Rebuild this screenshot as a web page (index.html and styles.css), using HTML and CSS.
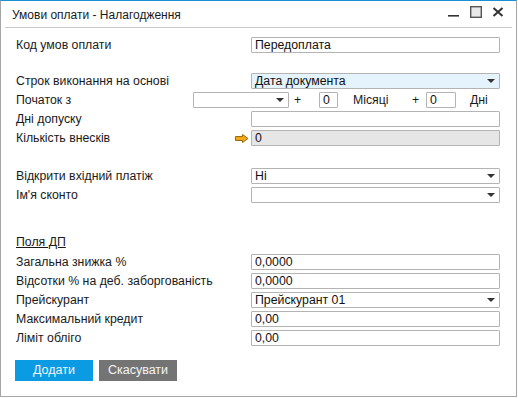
FILE: index.html
```html
<!DOCTYPE html>
<html lang="uk">

<head>
    <meta charset="UTF-8">
    <title>Умови оплати - Налагодження</title>
    <link rel="stylesheet" href="styles.css">
</head>

<body>
    <div class="window">
        <div class="titlebar">
            <div class="title">Умови оплати - Налагодження</div>
            <div class="win-btns">
                <svg width="12" height="12" viewBox="0 0 12 12"><rect x="0" y="9" width="11" height="1.6" fill="#333"/></svg>
                <svg width="12" height="12" viewBox="0 0 12 12"><rect x="0.7" y="0.7" width="10.6" height="10.6" fill="#e8e8e8" stroke="#555" stroke-width="1.4"/></svg>
                <svg width="12" height="12" viewBox="0 0 12 12"><path d="M1.5 2 L10.5 10 M10.5 2 L1.5 10" stroke="#333" stroke-width="2"/></svg>
            </div>
        </div>
        <div class="form">
            <div class="row first">
                <div class="label">Код умов оплати</div>
                <div class="field">Передоплата</div>
            </div>

            <div class="row group">
                <div class="label">Строк виконання на основі</div>
                <div class="field select active">Дата документа<span class="caret"></span></div>
            </div>
            <div class="row">
                <div class="label short">Початок з</div>
                <div class="field select start"><span class="caret"></span></div>
                <span class="plus">+</span>
                <div class="field num-a">0</div>
                <span class="unit months">Місяці</span>
                <span class="plus second">+</span>
                <div class="field num-b">0</div>
                <span class="unit days">Дні</span>
            </div>
            <div class="row">
                <div class="label">Дні допуску</div>
                <div class="field"></div>
            </div>
            <div class="row">
                <div class="label link-label">Кількість внесків
                    <svg class="link-arrow" width="14" height="9" viewBox="0 0 14 9"><path d="M0.5 2.5 H7.5 V0.5 L13 4.5 L7.5 8.5 V6.5 H0.5 Z" fill="#f2a71c" stroke="#9a6a08" stroke-width="1"/></svg>
                </div>
                <div class="field readonly">0</div>
            </div>

            <div class="row group wide">
                <div class="label">Відкрити вхідний платіж</div>
                <div class="field select">Ні<span class="caret"></span></div>
            </div>
            <div class="row">
                <div class="label">Ім'я сконто</div>
                <div class="field select"><span class="caret"></span></div>
            </div>

            <div class="section">Поля ДП</div>
            <div class="row">
                <div class="label">Загальна знижка %</div>
                <div class="field">0,0000</div>
            </div>
            <div class="row">
                <div class="label">Відсотки % на деб. заборгованість</div>
                <div class="field">0,0000</div>
            </div>
            <div class="row">
                <div class="label">Прейскурант</div>
                <div class="field select">Прейскурант 01<span class="caret"></span></div>
            </div>
            <div class="row">
                <div class="label">Максимальний кредит</div>
                <div class="field">0,00</div>
            </div>
            <div class="row">
                <div class="label">Ліміт обліго</div>
                <div class="field">0,00</div>
            </div>

            <div class="buttons">
                <div class="btn primary">Додати</div>
                <div class="btn secondary">Скасувати</div>
            </div>
        </div>
    </div>
</body>

</html>
```

FILE: styles.css
```css
* {
    margin: 0;
    padding: 0;
    box-sizing: border-box;
}

body {
    background: #fff;
    font-family: "Liberation Sans", Arial, sans-serif;
    font-size: 12.3px;
    color: #1a1a1a;
}

.window {
    width: 517px;
    height: 397px;
    border: 1px solid #a6a6a6;
    border-top: 1px solid #1b8fd6;
    background: #fff;
}

.titlebar {
    display: flex;
    align-items: center;
    justify-content: space-between;
    height: 27px;
    margin: 0 4px;
    border-bottom: 1px solid #cacaca;
    padding: 0 8px 0 7px;
}

.title {
    font-size: 12px;
    color: #1a1a1a;
    padding-top: 1px;
}

.win-btns {
    display: flex;
    gap: 10px;
    margin-top: -4px;
}

.form {
    padding-left: 15px;
}

.row {
    display: flex;
    align-items: center;
    height: 16px;
    margin-top: 3px;
}

.row.first {
    margin-top: 9px;
}

.row.group {
    margin-top: 20px;
}

.row.group.wide {
    margin-top: 22px;
}

.label {
    width: 235px;
    flex-shrink: 0;
    white-space: nowrap;
}

.label.short {
    width: 177px;
}

.link-label {
    display: flex;
    align-items: center;
    justify-content: space-between;
    padding-right: 2px;
}

.link-arrow {
    display: block;
}

.field {
    position: relative;
    flex-shrink: 0;
    width: 249px;
    height: 16px;
    line-height: 14px;
    border: 1px solid #b4b4b4;
    border-radius: 1px;
    padding-left: 3px;
    background: #fff;
    color: #111;
    white-space: nowrap;
}

.field.active {
    background: #e5f3fd;
}

.field.readonly {
    background: #e6e6e6;
}

.caret {
    position: absolute;
    right: 4px;
    top: 5px;
    width: 0;
    height: 0;
    border-left: 4px solid transparent;
    border-right: 4px solid transparent;
    border-top: 4px solid #333;
}

.field.start {
    width: 96px;
}

.plus {
    width: 30px;
    flex-shrink: 0;
    padding-left: 5px;
}

.plus.second {
    width: 14px;
    padding-left: 0;
}

.field.num-a {
    width: 19px;
}

.field.num-b {
    width: 30px;
}

.unit.months {
    width: 59px;
    flex-shrink: 0;
    margin-left: 15px;
}

.unit.days {
    margin-left: 14px;
}

.section {
    margin-top: 31px;
    margin-bottom: 4px;
    height: 16px;
    line-height: 16px;
    text-decoration: underline;
}

.buttons {
    display: flex;
    gap: 6px;
    margin-top: 14px;
    margin-left: -1px;
}

.btn {
    width: 78px;
    height: 21px;
    line-height: 21px;
    text-align: center;
    color: #f4f4f4;
    font-size: 12.5px;
}

.btn.primary {
    background: #0b9be3;
}

.btn.secondary {
    background: #747474;
}
```
